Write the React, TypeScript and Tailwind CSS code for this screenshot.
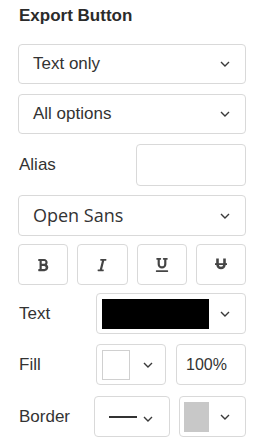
import React from 'react';
import { FaBold, FaItalic, FaUnderline } from 'react-icons/fa';

const Chevron: React.FC = () => (
  <svg width="10" height="6" viewBox="0 0 10 6" className="shrink-0">
    <polyline points="1,1 5,5 9,1" fill="none" stroke="#3a3a3a" strokeWidth="1.4" />
  </svg>
);

// U with a bar through it
const StrikeU = ({ className }: { className?: string }) => (
  <svg viewBox="0 0 12 13" className={className}>
    <path d="M2.5 0.5 V6.5 a3.5 3.5 0 0 0 7 0 V0.5" fill="none" stroke="currentColor" strokeWidth="2.6" />
    <rect x="0" y="5.2" width="12" height="1.8" fill="currentColor" />
  </svg>
);

const Select = ({ label }: { label: string }) => (
  <div className="flex h-10 w-full items-center justify-between rounded border border-[#d9d9d9] bg-white pl-[14px] pr-[15px]">
    <span className="text-[17px] text-[#333]">{label}</span>
    <Chevron />
  </div>
);

const Label = ({ children }: { children: React.ReactNode }) => (
  <span className="pl-px text-[17px] text-[#333]">{children}</span>
);

export default function App() {
  return (
    <div className="w-[267px] h-[446px] bg-white pl-[18px] pr-[21px] font-['Liberation_Sans',Arial,sans-serif]">
      <h2 className="pt-[5px] pl-px text-[17px] font-bold leading-[22px] text-[#2b2b2b]">Export Button</h2>

      <div className="mt-[17px] flex flex-col">
        <Select label="Text only" />
        <div className="mt-[10px]">
          <Select label="All options" />
        </div>

        {/* alias */}
        <div className="mt-[10px] flex items-center justify-between">
          <Label>Alias</Label>
          <div className="h-[42px] w-[110px] rounded border border-[#d9d9d9]" />
        </div>

        <div className="mt-[9px]">
          <div className="flex h-[41px] w-full items-center justify-between rounded border border-[#d9d9d9] pl-[14px] pr-[15px]">
            <span className="font-['Open_Sans',sans-serif] text-[18px] text-[#333]">Open Sans</span>
            <Chevron />
          </div>
        </div>

        {/* style buttons */}
        <div className="mt-[8px] flex gap-[9px]">
          {[FaBold, FaItalic, FaUnderline].map((Icon, i) => (
            <div
              key={i}
              className="flex h-[41px] flex-1 items-center justify-center rounded border border-[#d9d9d9]"
            >
              <Icon className="h-[14px] w-[14px] text-[#454545]" />
            </div>
          ))}
          <div className="flex h-[41px] flex-1 items-center justify-center rounded border border-[#d9d9d9]">
            <StrikeU className="h-[13px] w-[12px] text-[#454545]" />
          </div>
        </div>

        {/* text colour */}
        <div className="mt-[8px] flex items-center justify-between">
          <Label>Text</Label>
          <div className="flex h-[41px] w-[150px] items-center justify-between rounded border border-[#d9d9d9] pl-[5px] pr-[15px]">
            <div className="h-[30px] w-[107px] bg-black" />
            <Chevron />
          </div>
        </div>

        {/* fill */}
        <div className="mt-[10px] flex items-center">
          <Label>Fill</Label>
          <div className="ml-auto flex h-[41px] w-[70px] items-center rounded border border-[#d9d9d9] pl-[5px]">
            <div className="h-[30px] w-[28px] border border-[#d0d0d0] bg-white" />
            <span className="ml-[13px]"><Chevron /></span>
          </div>
          <div className="ml-[10px] flex h-[41px] w-[70px] items-center rounded border border-[#d9d9d9] pl-[9px]">
            <span className="text-[16px] text-[#333]">100%</span>
          </div>
        </div>

        {/* border */}
        <div className="mt-[11px] flex items-center">
          <Label>Border</Label>
          <div className="ml-auto flex h-[41px] w-[76px] items-center rounded border border-[#d9d9d9] pl-[14px]">
            <div className="h-[2px] w-[28px] bg-[#333]" />
            <span className="ml-[6px] mt-[5px]"><Chevron /></span>
          </div>
          <div className="ml-[9px] flex h-[41px] w-[67px] items-center justify-between rounded border border-[#d9d9d9] pl-[4px] pr-[15px]">
            <div className="h-[30px] w-[25px] bg-[#c8c8c8]" />
            <Chevron />
          </div>
        </div>
      </div>
    </div>
  );
}
